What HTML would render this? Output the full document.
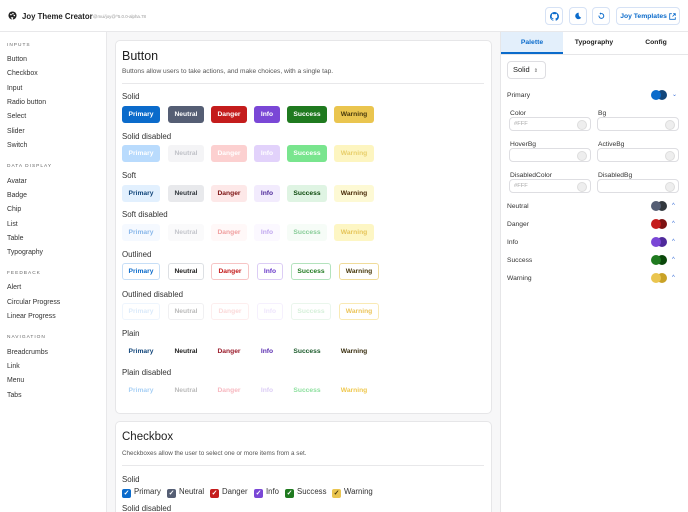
<!DOCTYPE html>
<html style="overflow:hidden;width:688px;height:512px"><head><meta charset="utf-8"><style>
*{box-sizing:border-box;margin:0;padding:0}
body{width:688px;height:512px;overflow:hidden;font-family:"Liberation Sans",sans-serif;color:#222}
#w{position:relative;width:688px;height:512px;overflow:hidden;background:#f7f7f8}
.a{position:absolute}
header{position:absolute;left:0;top:0;width:688px;height:32px;background:#fff;border-bottom:1px solid #e8e8ea}
.side{position:absolute;left:0;top:32px;width:107px;height:480px;background:#fff;border-right:1px solid #e8e8ea}
.side .h{position:absolute;left:7px;font-size:4.8px;letter-spacing:1px;color:#666}
.side .i{position:absolute;left:7px;font-size:6.9px;color:#333}
.card{position:absolute;left:115px;width:377px;background:#fff;border:1px solid #e6e6e8;border-radius:5px}
.lbl{position:absolute;left:122px;font-size:7.9px;color:#333}
.b{position:absolute;height:17px;border-radius:3px;font-size:6.7px;font-weight:bold;display:flex;align-items:center;justify-content:center}
.rp{position:absolute;left:500px;top:32px;width:188px;height:480px;background:#fff;border-left:1px solid #e6e6e8}
.rl{position:absolute;font-size:6.7px;color:#333}
.inp{position:absolute;width:82px;height:14px;border:1px solid #dedee2;border-radius:4px;background:#fff;font-size:5.8px;color:#aaa;padding-left:4px;line-height:12px}
.inp::after{content:"";position:absolute;right:3px;top:2px;width:8px;height:8px;border-radius:50%;background:#eee;border:1px solid #ddd}
.dots{position:absolute;left:651px}
.dots i{position:absolute;top:0;width:10px;height:10px;border-radius:50%}
.chev{position:absolute;left:672px;font-size:6px;color:#3a6fd8}
.hb{position:absolute;top:7px;height:18px;border:1px solid #d6e2f5;border-radius:4px;display:flex;align-items:center;justify-content:center;color:#0b6bcb;font-size:6.8px;font-weight:bold}
.cb{position:absolute;top:487px;font-size:7.8px;color:#333;white-space:nowrap}
.cb b{display:inline-block;width:9px;height:9px;border-radius:2px;color:#fff;font-size:7px;text-align:center;line-height:9px;vertical-align:-1px;margin-right:3px}
</style></head><body><div id="w">
<header>
<svg class="a" style="left:8px;top:11px" width="9" height="9" viewBox="0 0 10 10"><circle cx="5" cy="5" r="4.5" fill="#222"/><circle cx="3.3" cy="4" r="0.9" fill="#fff"/><circle cx="5.5" cy="3" r="0.9" fill="#fff"/><circle cx="7" cy="5" r="0.9" fill="#fff"/><path d="M5 10 L3 7 L6 7Z" fill="#fff"/></svg>
<div class="a" style="left:22px;top:12px;font-size:7.8px;font-weight:bold">Joy Theme Creator</div>
<div class="a" style="left:93px;top:14px;font-size:4.4px;color:#999">@mui/joy@^5.0.0-alpha.78</div>
<div class="hb" style="left:545px;width:18px"><svg width="9" height="9" viewBox="0 0 16 16"><path fill="#0b6bcb" d="M8 0a8 8 0 0 0-2.5 15.6c.4 0 .5-.2.5-.4v-1.5c-2.2.5-2.7-1-2.7-1-.4-.9-.9-1.2-.9-1.2-.7-.5.1-.5.1-.5.8.1 1.2.8 1.2.8.7 1.3 1.9.9 2.3.7.1-.5.3-.9.5-1.1-1.8-.2-3.6-.9-3.6-4 0-.9.3-1.6.8-2.1-.1-.2-.4-1 .1-2.1 0 0 .7-.2 2.2.8a7.4 7.4 0 0 1 4 0c1.5-1 2.2-.8 2.2-.8.4 1.1.2 1.9.1 2.1.5.6.8 1.3.8 2.1 0 3.1-1.9 3.8-3.6 4 .3.3.6.8.6 1.5v2.2c0 .2.1.5.6.4A8 8 0 0 0 8 0z"/></svg></div>
<div class="hb" style="left:569px;width:18px"><svg width="8" height="8" viewBox="0 0 10 10"><path d="M6 1a4 4 0 1 0 3 6A4.5 4.5 0 0 1 6 1z" fill="#0b6bcb"/></svg></div>
<div class="hb" style="left:592px;width:18px"><svg width="8" height="8" viewBox="0 0 10 10"><path d="M2.5 4.5a3 3 0 1 0 2.5-2.5" stroke="#0b6bcb" stroke-width="1.2" fill="none"/><path d="M5 0.5v3l-2-1.5z" fill="#0b6bcb"/></svg></div>
<div class="hb" style="left:616px;width:64px">Joy Templates&nbsp;<svg width="7" height="7" viewBox="0 0 10 10"><path d="M4 1H1v8h8V6M6 1h3v3M9 1L5 5" stroke="#0b6bcb" stroke-width="1.2" fill="none"/></svg></div>
</header>
<div class="side">
<div class="h" style="top:11px">INPUTS</div>
<div class="i" style="top:24px">Button</div><div class="i" style="top:38px">Checkbox</div><div class="i" style="top:53px">Input</div><div class="i" style="top:67px">Radio button</div><div class="i" style="top:81px">Select</div><div class="i" style="top:96px">Slider</div><div class="i" style="top:110px">Switch</div>
<div class="h" style="top:132px">DATA DISPLAY</div>
<div class="i" style="top:146px">Avatar</div><div class="i" style="top:160px">Badge</div><div class="i" style="top:174px">Chip</div><div class="i" style="top:189px">List</div><div class="i" style="top:203px">Table</div><div class="i" style="top:217px">Typography</div>
<div class="h" style="top:239px">FEEDBACK</div>
<div class="i" style="top:252px">Alert</div><div class="i" style="top:267px">Circular Progress</div><div class="i" style="top:281px">Linear Progress</div>
<div class="h" style="top:303px">NAVIGATION</div>
<div class="i" style="top:317px">Breadcrumbs</div><div class="i" style="top:331px">Link</div><div class="i" style="top:345px">Menu</div><div class="i" style="top:360px">Tabs</div>
</div>

<div class="card" style="top:40px;height:374px"></div>
<div class="a" style="left:122px;top:49px;font-size:12.5px">Button</div>
<div class="a" style="left:122px;top:68px;font-size:6.6px;color:#555">Buttons allow users to take actions, and make choices, with a single tap.</div>
<div class="a" style="left:122px;top:83px;width:362px;height:1px;background:#e8e8ea"></div>

<div class="lbl" style="top:92px">Solid</div>
<div class="b" style="top:106px;left:122px;width:38px;background:#0b6bcb;color:#fff">Primary</div>
<div class="b" style="top:106px;left:168px;width:36px;background:#555e74;color:#fff">Neutral</div>
<div class="b" style="top:106px;left:211px;width:36px;background:#c41c1c;color:#fff">Danger</div>
<div class="b" style="top:106px;left:254px;width:26px;background:#7a47d6;color:#fff">Info</div>
<div class="b" style="top:106px;left:287px;width:40px;background:#1f7a1f;color:#fff">Success</div>
<div class="b" style="top:106px;left:334px;width:40px;background:#eac54f;color:#493a0d">Warning</div>

<div class="lbl" style="top:132px">Solid disabled</div>
<div class="b" style="top:145px;left:122px;width:38px;background:#b9dbfd;color:#fff">Primary</div>
<div class="b" style="top:145px;left:168px;width:36px;background:#f4f4f6;color:#c0c2c8">Neutral</div>
<div class="b" style="top:145px;left:211px;width:36px;background:#fcd0d0;color:#fff">Danger</div>
<div class="b" style="top:145px;left:254px;width:26px;background:#e2d2fb;color:#fff">Info</div>
<div class="b" style="top:145px;left:287px;width:40px;background:#79e58e;color:#fff">Success</div>
<div class="b" style="top:145px;left:334px;width:40px;background:#fdf5c0;color:#e8cf6b">Warning</div>

<div class="lbl" style="top:171px">Soft</div>
<div class="b" style="top:185px;left:122px;width:38px;background:#e2f0fe;color:#12467b">Primary</div>
<div class="b" style="top:185px;left:168px;width:36px;background:#e8e9ec;color:#32383e">Neutral</div>
<div class="b" style="top:185px;left:211px;width:36px;background:#fde8e8;color:#7d1212">Danger</div>
<div class="b" style="top:185px;left:254px;width:26px;background:#f2ebfd;color:#4f2a9b">Info</div>
<div class="b" style="top:185px;left:287px;width:40px;background:#dff4e3;color:#0a470a">Success</div>
<div class="b" style="top:185px;left:334px;width:40px;background:#fdf9d4;color:#492b08">Warning</div>

<div class="lbl" style="top:210px">Soft disabled</div>
<div class="b" style="top:224px;left:122px;width:38px;background:#f5f9ff;color:#8ab8ea">Primary</div>
<div class="b" style="top:224px;left:168px;width:36px;background:#fafafb;color:#c4c6cc">Neutral</div>
<div class="b" style="top:224px;left:211px;width:36px;background:#fff8f8;color:#f0a0a0">Danger</div>
<div class="b" style="top:224px;left:254px;width:26px;background:#fbf8ff;color:#c1a8ef">Info</div>
<div class="b" style="top:224px;left:287px;width:40px;background:#f6fcf7;color:#88cc98">Success</div>
<div class="b" style="top:224px;left:334px;width:40px;background:#fdf6c4;color:#e6c55a">Warning</div>

<div class="lbl" style="top:250px">Outlined</div>
<div class="b" style="top:263px;left:122px;width:38px;border:1px solid #c7dff7;color:#0b6bcb">Primary</div>
<div class="b" style="top:263px;left:168px;width:36px;border:1px solid #dde0e4;color:#222">Neutral</div>
<div class="b" style="top:263px;left:211px;width:38px;border:1px solid #f7c5c5;color:#c41c1c">Danger</div>
<div class="b" style="top:263px;left:257px;width:26px;border:1px solid #dccdf5;color:#6a3ac9">Info</div>
<div class="b" style="top:263px;left:291px;width:40px;border:1px solid #b3e3bd;color:#1f7a1f">Success</div>
<div class="b" style="top:263px;left:339px;width:40px;border:1px solid #f0dc9a;color:#493a0d">Warning</div>

<div class="lbl" style="top:290px">Outlined disabled</div>
<div class="b" style="top:303px;left:122px;width:38px;border:1px solid #eef5fd;color:#dbeafa">Primary</div>
<div class="b" style="top:303px;left:168px;width:36px;border:1px solid #f0f0f2;color:#bbb">Neutral</div>
<div class="b" style="top:303px;left:211px;width:38px;border:1px solid #fdeeee;color:#fbdada">Danger</div>
<div class="b" style="top:303px;left:257px;width:26px;border:1px solid #f5f0fd;color:#eee5fc">Info</div>
<div class="b" style="top:303px;left:291px;width:40px;border:1px solid #eaf6ec;color:#d6f0da">Success</div>
<div class="b" style="top:303px;left:339px;width:40px;border:1px solid #f9eab5;color:#ecc55a">Warning</div>

<div class="lbl" style="top:329px">Plain</div>
<div class="b" style="top:343px;left:122px;width:38px;color:#12467b">Primary</div>
<div class="b" style="top:343px;left:168px;width:36px;color:#222">Neutral</div>
<div class="b" style="top:343px;left:211px;width:36px;color:#9a1a2a">Danger</div>
<div class="b" style="top:343px;left:254px;width:26px;color:#5b2eb0">Info</div>
<div class="b" style="top:343px;left:287px;width:40px;color:#1a5a2a">Success</div>
<div class="b" style="top:343px;left:334px;width:40px;color:#3a2f10">Warning</div>

<div class="lbl" style="top:368px">Plain disabled</div>
<div class="b" style="top:382px;left:122px;width:38px;color:#a8d0f5">Primary</div>
<div class="b" style="top:382px;left:168px;width:36px;color:#bbb">Neutral</div>
<div class="b" style="top:382px;left:211px;width:36px;color:#f7b8c0">Danger</div>
<div class="b" style="top:382px;left:254px;width:26px;color:#dccdf5">Info</div>
<div class="b" style="top:382px;left:287px;width:40px;color:#8fe0a0">Success</div>
<div class="b" style="top:382px;left:334px;width:40px;color:#efc84f">Warning</div>

<div class="card" style="top:421px;height:91px;border-bottom:none;border-radius:5px 5px 0 0"></div>
<div class="a" style="left:122px;top:431px;font-size:11.5px">Checkbox</div>
<div class="a" style="left:122px;top:450px;font-size:6.3px;color:#555">Checkboxes allow the user to select one or more items from a set.</div>
<div class="a" style="left:122px;top:465px;width:362px;height:1px;background:#e8e8ea"></div>
<div class="lbl" style="top:475px">Solid</div>
<div class="cb" style="left:122px"><b style="background:#0b6bcb">✓</b>Primary</div>
<div class="cb" style="left:167px"><b style="background:#555e74">✓</b>Neutral</div>
<div class="cb" style="left:210px"><b style="background:#c41c1c">✓</b>Danger</div>
<div class="cb" style="left:254px"><b style="background:#7a47d6">✓</b>Info</div>
<div class="cb" style="left:285px"><b style="background:#1f7a1f">✓</b>Success</div>
<div class="cb" style="left:332px"><b style="background:#eac54f;color:#493a0d">✓</b>Warning</div>
<div class="lbl" style="top:504px;height:8px;overflow:hidden">Solid disabled</div>

<div class="rp"></div>
<div class="a" style="left:501px;top:32px;width:62px;height:22px;background:#e3effb;border-bottom:2px solid #0b6bcb;font-size:6.8px;font-weight:bold;color:#0b6bcb;text-align:center;line-height:22px">Palette</div>
<div class="a" style="left:563px;top:32px;width:62px;height:22px;font-size:6.8px;font-weight:bold;text-align:center;line-height:22px">Typography</div>
<div class="a" style="left:625px;top:32px;width:62px;height:22px;font-size:6.8px;font-weight:bold;text-align:center;line-height:22px">Config</div>
<div class="a" style="left:501px;top:54px;width:187px;height:1px;background:#e6e6e8"></div>
<div class="a" style="left:507px;top:61px;width:39px;height:18px;border:1px solid #dedee2;border-radius:4px;font-size:7.5px;line-height:16px;padding-left:5px">Solid <span style="font-size:5px;color:#666;margin-left:2px">⇕</span></div>

<div class="rl" style="left:507px;top:92px">Primary</div>
<div class="dots" style="top:90px"><i style="left:6px;background:#12467b"></i><i style="left:0;background:#0b6bcb"></i></div><div class="chev" style="top:91px">⌄</div>
<div class="rl" style="left:510px;top:110px">Color</div><div class="rl" style="left:598px;top:110px">Bg</div>
<div class="inp" style="left:509px;top:117px">#FFF</div><div class="inp" style="left:597px;top:117px"></div>
<div class="rl" style="left:510px;top:141px">HoverBg</div><div class="rl" style="left:598px;top:141px">ActiveBg</div>
<div class="inp" style="left:509px;top:148px"></div><div class="inp" style="left:597px;top:148px"></div>
<div class="rl" style="left:510px;top:172px">DisabledColor</div><div class="rl" style="left:598px;top:172px">DisabledBg</div>
<div class="inp" style="left:509px;top:179px">#FFF</div><div class="inp" style="left:597px;top:179px"></div>

<div class="rl" style="left:507px;top:203px">Neutral</div>
<div class="dots" style="top:201px"><i style="left:6px;background:#32383e"></i><i style="left:0;background:#555e74"></i></div><div class="chev" style="top:203px">^</div>
<div class="rl" style="left:507px;top:221px">Danger</div>
<div class="dots" style="top:219px"><i style="left:6px;background:#7d1212"></i><i style="left:0;background:#c41c1c"></i></div><div class="chev" style="top:221px">^</div>
<div class="rl" style="left:507px;top:239px">Info</div>
<div class="dots" style="top:237px"><i style="left:6px;background:#4f2a9b"></i><i style="left:0;background:#7a47d6"></i></div><div class="chev" style="top:239px">^</div>
<div class="rl" style="left:507px;top:257px">Success</div>
<div class="dots" style="top:255px"><i style="left:6px;background:#0a470a"></i><i style="left:0;background:#1f7a1f"></i></div><div class="chev" style="top:257px">^</div>
<div class="rl" style="left:507px;top:275px">Warning</div>
<div class="dots" style="top:273px"><i style="left:6px;background:#c9a227"></i><i style="left:0;background:#eac54f"></i></div><div class="chev" style="top:275px">^</div>
</div></body></html>
